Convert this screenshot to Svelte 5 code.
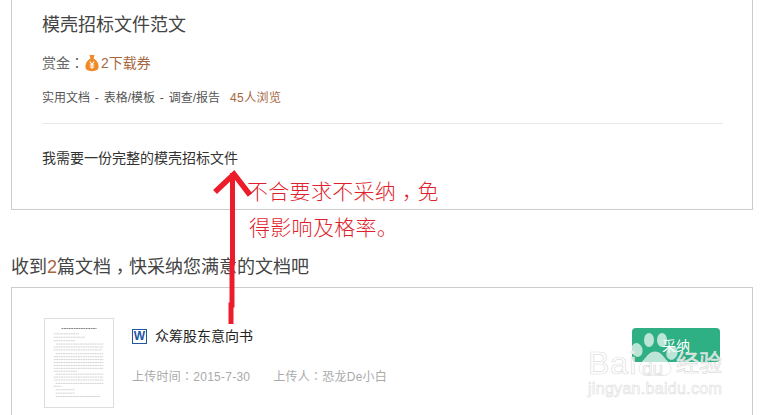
<script>
  // fake text rows on the document thumbnail: [x, y, width]
  const thumbLines = [
    [17, 9.5, 36], [9, 15, 26], [9, 18.5, 32], [9, 22, 22], [11, 25.5, 49], [9, 28.5, 51], [9, 31.5, 50],
    [11, 35.5, 49], [9, 38.5, 51], [9, 41.5, 51], [9, 44.5, 51], [9, 47.5, 51], [9, 50.5, 51], [9, 53.5, 24],
    [11, 56.5, 49], [9, 59.5, 51], [9, 62.5, 51], [11, 66, 49], [9, 69, 8], [11, 72.5, 20], [11, 76, 20], [11, 79.5, 46]
  ];
</script>

<div class="page">
  <section class="card question">
    <h1>模壳招标文件范文</h1>
    <div class="reward">
      <span>赏金<span class="pun">：</span></span>
      <svg class="bag" viewBox="0 0 14 18" width="14" height="18">
        <path d="M4.5 1h5L8.6 4.6c3 1.600 5 4.700 5 8 0 3.300-2.600 4.600-6.600 4.600S.4 15.900.4 12.600c0-3.300 2-6.400 5-8z" fill="#f08a24" />
        <path d="M4.800 7.500 7 10.500l2.200-3M4.700 11h4.600M4.700 13h4.600M7 10.500v4.500" fill="none" stroke="#fff" stroke-width="1.100" />
      </svg>
      <span class="brown">2下载券</span>
    </div>
    <div class="crumbs">实用文档 - 表格/模板 - 调查/报告<span class="views">45人浏览</span></div>
    <hr />
    <p class="desc">我需要一份完整的模壳招标文件</p>
  </section>

  <h2>收到<span class="brown">2</span>篇文档<span class="pun comma">，</span>快采纳您满意的文档吧</h2>

  <section class="card doc">
    <div class="thumb">
      <svg viewBox="0 0 70 90" width="68" height="88">
        {#each thumbLines as [x, y, w]}
          <line x1={x} y1={y} x2={x + w} y2={y} stroke={y < 10 ? '#777' : '#ccc'} stroke-width="0.9" stroke-dasharray="2 0.500" />
        {/each}
      </svg>
    </div>
    <div class="info">
      <div class="doc-title">
        <span class="word">W</span>
        众筹股东意向书
      </div>
      <div class="meta">
        <span>上传时间<span class="pun">：</span>2015-7-30</span>
        <span>上传人<span class="pun">：</span>恐龙De小白</span>
      </div>
    </div>
    <button>采纳</button>
  </section>

  <!-- red annotation painted over the page -->
  <svg class="arrow" viewBox="0 0 60 170" width="60" height="170">
    <path d="M15 28 34 10l16 21" fill="none" stroke="#ec1c2a" stroke-width="5.500" stroke-linejoin="miter" />
    <path d="M32.500 9v90l-.5 0v42l-1 0v19" fill="none" stroke="#ec1c2a" stroke-width="5" />
  </svg>
  <div class="note first">不合要求不采纳<span class="pun comma">，</span>免</div>
  <div class="note second">得影响及格率。</div>

  <!-- baidu watermark -->
  <div class="watermark">
    <svg class="paw" viewBox="0 0 60 50" width="60" height="50">
      <ellipse cx="8" cy="19" rx="5.500" ry="7" transform="rotate(-15 8 19)" />
      <ellipse cx="20" cy="9" rx="5" ry="7" />
      <ellipse cx="33" cy="9" rx="5" ry="7" />
      <ellipse cx="43" cy="22" rx="5.500" ry="7" transform="rotate(20 43 22)" />
      <path class="palm" d="M26 21c6 0 8 5 12 9 4 4 5 8 3 11-2 4-8 4-15 3-7 1-13 1-15-3-2-3-1-7 3-11 4-4 6-9 12-9z" />
    </svg>
    <span class="wm-brand">Bai</span>
    <span class="du">du</span>
    <span class="wm-cn">经验</span>
    <span class="wm-url">jingyan.baidu.com</span>
  </div>
</div>

<style>
  :global(body) {
    margin: 0;
    background: #fff;
  }

  .page {
    position: relative;
    height: 415px;
    overflow: hidden;
    padding: 0 13px 0 11px;
    font-family: "Liberation Sans", "Noto Sans CJK SC", sans-serif;
    color: #444;
  }

  /* traditional-chinese punctuation sits centred in its box, like the original */
  .pun {
    font-family: "Noto Sans CJK TC", sans-serif;
    line-height: 0;
  }

  .comma {
    position: relative;
    top: 0.28em;
  }

  .card {
    border: 1px solid #ccc;
  }

  .question {
    border-top: none;
    padding: 10px 29px 41px 30px;
  }

  h1 {
    margin: 0;
    font-size: 18px;
    font-weight: 400;
    line-height: 30px;
  }

  .reward {
    display: flex;
    align-items: center;
    margin-top: 13px;
    font-size: 14px;
    line-height: 20px;
    color: #666;
  }

  .bag {
    margin: 0 2px 0 1px;
  }

  .brown {
    color: #a5673f;
  }

  .crumbs {
    margin-top: 15px;
    font-size: 12px;
    line-height: 20px;
    word-spacing: 1.5px;
    color: #555;
  }

  .views {
    margin-left: 10px;
    letter-spacing: 0.4px;
    color: #a5673f;
  }

  hr {
    margin: 15px 0 0;
    border: none;
    border-top: 1px solid #e8e8e8;
  }

  .desc {
    margin: 24px 0 0;
    font-size: 14px;
    line-height: 20px;
    color: #333;
  }

  h2 {
    margin: 42px 0 5px;
    font-size: 18px;
    font-weight: 400;
    line-height: 30px;
  }

  .doc {
    display: flex;
    align-items: flex-start;
    padding: 30px 32px 40px;
  }

  .thumb {
    width: 68px;
    height: 88px;
    border: 1px solid #ddd;
    margin-right: 18px;
  }

  .thumb svg {
    display: block;
  }

  .info {
    flex: 1;
  }

  .doc-title {
    display: flex;
    align-items: center;
    padding-top: 10px;
    font-size: 14px;
    line-height: 16px;
    color: #222;
  }

  .word {
    width: 13px;
    height: 13px;
    margin-right: 8px;
    border: 1px solid #2255a5;
    font-size: 12px;
    font-weight: 700;
    line-height: 13px;
    text-align: center;
    color: #2255a5;
  }

  .meta {
    display: flex;
    gap: 23px;
    margin-top: 25px;
    font-size: 12px;
    line-height: 16px;
    letter-spacing: 0.25px;
    color: #aaa;
  }

  button {
    width: 88px;
    height: 34px;
    margin-top: 10px;
    border: none;
    border-radius: 4px;
    background: #2eaf84;
    font: inherit;
    font-size: 14px;
    color: #fff;
  }

  .arrow {
    position: absolute;
    left: 200px;
    top: 164px;
  }

  .note {
    position: absolute;
    font-size: 21px;
    font-weight: 300;
    line-height: 28px;
    letter-spacing: 0.3px;
    white-space: nowrap;
    color: #e01f2d;
  }

  .first {
    left: 247px;
    top: 178px;
  }

  .second {
    left: 249px;
    top: 214px;
  }

  .watermark {
    position: absolute;
    left: 588px;
    top: 330px;
    width: 140px;
    height: 70px;
  }

  .paw {
    position: absolute;
    left: 41px;
    top: 1px;
    fill: rgba(255, 255, 255, 0.68);
  }

  .palm {
    stroke: #e2e2e2;
    stroke-width: 0.8;
  }

  .wm-brand,
  .du,
  .wm-cn,
  .wm-url {
    position: absolute;
    white-space: nowrap;
    color: rgba(255, 255, 255, 0.75);
    -webkit-text-stroke: 0.7px #dedede;
  }

  .wm-brand {
    left: 0;
    top: 17px;
    font-size: 32px;
    line-height: 32px;
    letter-spacing: 1px;
  }

  .du {
    left: 54px;
    top: 29px;
    font-size: 19px;
    line-height: 20px;
  }

  .wm-cn {
    left: 88px;
    top: 22px;
    font-size: 23px;
    line-height: 22px;
  }

  .wm-url {
    left: 0;
    top: 49px;
    font-size: 16px;
    line-height: 20px;
    letter-spacing: 0.3px;
    -webkit-text-stroke: 0.6px #dedede;
  }
</style>
